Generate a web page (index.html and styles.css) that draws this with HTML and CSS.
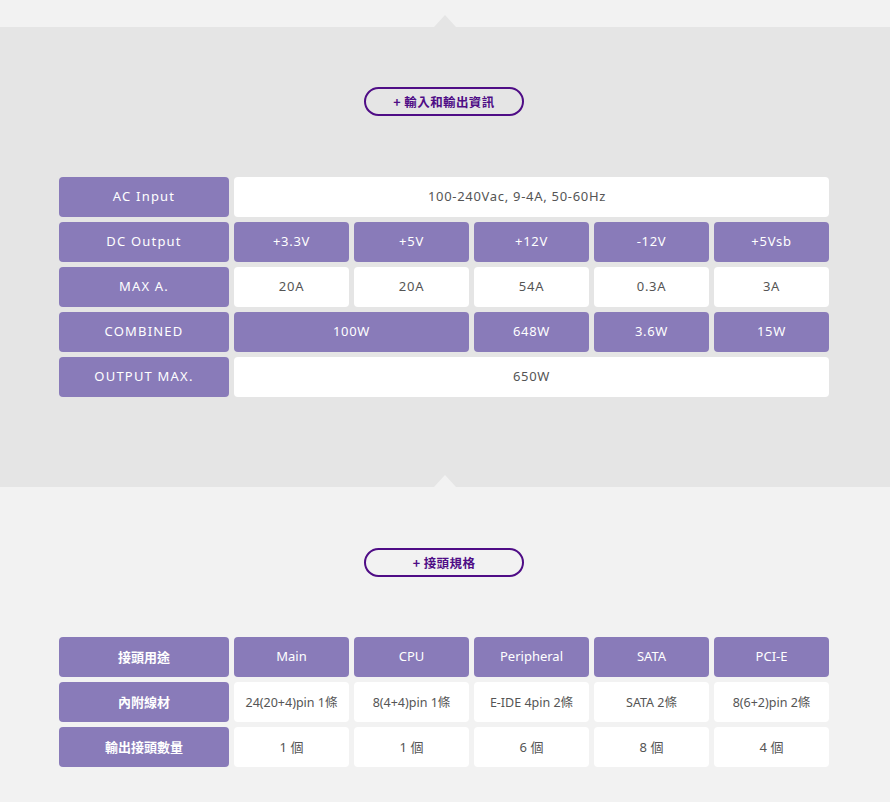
FILE: index.html
```html
<!DOCTYPE html>
<html lang="zh-Hant">
<head>
<meta charset="utf-8">
<link rel="stylesheet" href="styles.css">
</head>
<body>
<div class="topband"></div>
<section class="sec sec-grey">
  <div class="btn-wrap"><div class="pill">+ 輸入和輸出資訊</div></div>
  <div class="tbl spaced">
    <div class="row">
      <div class="cell head sp">AC Input</div>
      <div class="cell val span5 offset">100-240Vac, 9-4A, 50-60Hz</div>
    </div>
    <div class="row">
      <div class="cell head sp">DC Output</div>
      <div class="cell pv">+3.3V</div>
      <div class="cell pv">+5V</div>
      <div class="cell pv">+12V</div>
      <div class="cell pv">-12V</div>
      <div class="cell pv">+5Vsb</div>
    </div>
    <div class="row">
      <div class="cell head sp">MAX A.</div>
      <div class="cell val">20A</div>
      <div class="cell val">20A</div>
      <div class="cell val">54A</div>
      <div class="cell val">0.3A</div>
      <div class="cell val">3A</div>
    </div>
    <div class="row">
      <div class="cell head sp">COMBINED</div>
      <div class="cell pv span2">100W</div>
      <div class="cell pv">648W</div>
      <div class="cell pv">3.6W</div>
      <div class="cell pv">15W</div>
    </div>
    <div class="row">
      <div class="cell head sp">OUTPUT MAX.</div>
      <div class="cell val span5">650W</div>
    </div>
  </div>
</section>
<section class="sec sec-light">
  <div class="btn-wrap"><div class="pill">+ 接頭規格</div></div>
  <div class="tbl">
    <div class="row">
      <div class="cell head cjk">接頭用途</div>
      <div class="cell pv">Main</div>
      <div class="cell pv">CPU</div>
      <div class="cell pv">Peripheral</div>
      <div class="cell pv">SATA</div>
      <div class="cell pv">PCI-E</div>
    </div>
    <div class="row">
      <div class="cell head cjk">內附線材</div>
      <div class="cell val sm">24(20+4)pin 1條</div>
      <div class="cell val sm">8(4+4)pin 1條</div>
      <div class="cell val sm">E-IDE 4pin 2條</div>
      <div class="cell val sm">SATA 2條</div>
      <div class="cell val sm">8(6+2)pin 2條</div>
    </div>
    <div class="row">
      <div class="cell head cjk">輸出接頭數量</div>
      <div class="cell val">1 個</div>
      <div class="cell val">1 個</div>
      <div class="cell val">6 個</div>
      <div class="cell val">8 個</div>
      <div class="cell val">4 個</div>
    </div>
  </div>
</section>
</body>
</html>
```
FILE: styles.css
```css
* { box-sizing: border-box; }
html, body { margin: 0; padding: 0; }
body {
  background: #f2f2f2;
  font-family: "Noto Sans", "Noto Sans CJK TC", sans-serif;
  width: 890px;
}
.topband { height: 27px; background: #f2f2f2; }
.sec { position: relative; }
.sec::before {
  content: "";
  position: absolute;
  left: 434px;
  top: -12px;
  width: 0; height: 0;
  border-left: 11px solid transparent;
  border-right: 11px solid transparent;
  border-bottom: 12px solid #e5e5e5;
}
.sec-grey { background: #e5e5e5; padding: 60px 0 90px; }
.sec-light { background: #f2f2f2; padding: 61px 0 35px; }
.sec-light::before { border-bottom-color: #f2f2f2; }
.btn-wrap { display: flex; justify-content: center; margin-bottom: 61px; }
.sec-light .btn-wrap { margin-bottom: 60px; }
.pill {
  width: 160px; height: 29px;
  margin-left: -2px;
  border: 2px solid #4f0d86;
  border-radius: 15px;
  color: #4f0d86;
  font-family: "Noto Sans CJK TC", sans-serif;
  font-weight: 700;
  font-size: 12.5px;
  display: flex; align-items: center; justify-content: center;
  letter-spacing: 0.4px;
  padding-bottom: 1px;
}
.tbl { margin-left: 59px; width: 770px; display: flex; flex-direction: column; gap: 5px; }
.row { display: flex; gap: 5px; }
.cell {
  height: 40px;
  border-radius: 4px;
  display: flex; align-items: center; justify-content: center;
  font-size: 13px;
  width: 115px;
  flex: none;
  padding-bottom: 2px;
}
.spaced .cell { letter-spacing: 0.7px; }
.head { width: 170px; background: #897bb9; color: #fff; }
.spaced .sp { letter-spacing: 1.2px; }
.cjk { font-family: "Noto Sans CJK TC", sans-serif; font-weight: 700; font-size: 13px; }
.pv { background: #897bb9; color: #fff; }
.val { background: #fff; color: #555; }
.sm { font-size: 12.5px; }
.span2 { width: 235px; }
.span5 { width: 595px; }
.offset { padding-right: 29px; }
```
